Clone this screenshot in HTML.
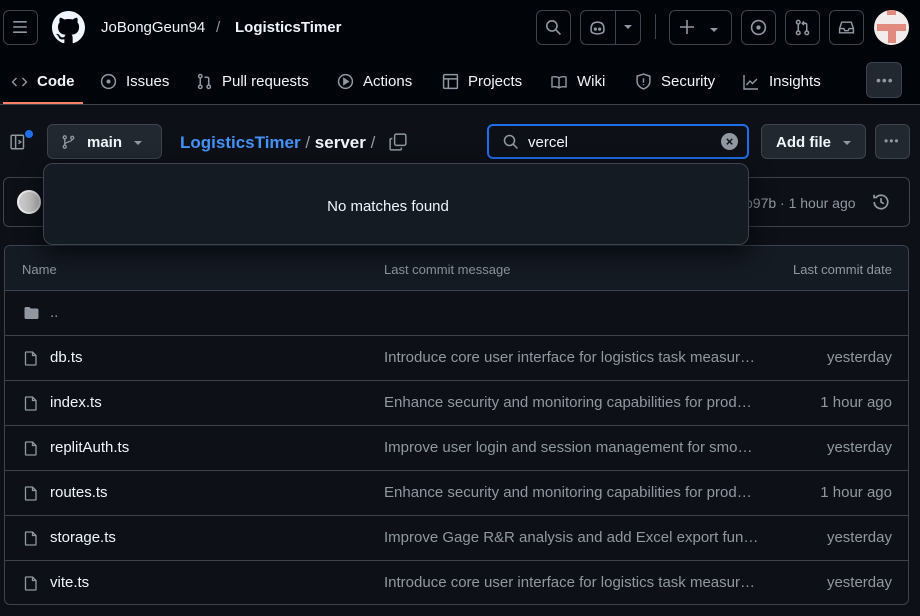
<!DOCTYPE html>
<html><head><meta charset="utf-8"><style>
*{box-sizing:border-box;margin:0;padding:0}
body{width:920px;height:616px;background:#0d1117;font-family:"Liberation Sans",sans-serif;color:#f0f6fc;position:relative;overflow:hidden;font-size:14px}
.abs{position:absolute}
.btn{position:absolute;border:1px solid #3d444d;border-radius:6px;background:transparent}
.hdr{position:absolute;left:0;top:0;width:920px;height:105px;background:#010409;border-bottom:1px solid #3d444d}
.tab{position:absolute;top:73px;font-size:15px;color:#f0f6fc;display:flex;align-items:center}
.tab svg{margin-right:9px}
svg{display:block}
.row{position:absolute;left:5px;width:903px;height:45px;border-top:1px solid #3d444d}
.row .n{position:absolute;left:45px;top:13px;font-size:15px;color:#f0f6fc}
.row .m{position:absolute;left:379px;top:13px;font-size:15px;color:#9198a1;width:376px;white-space:nowrap;overflow:hidden;text-overflow:ellipsis}
.row .d{position:absolute;right:16px;top:13px;font-size:15px;color:#9198a1}
.row svg{position:absolute;left:18px;top:14px}
</style></head><body>
<div class="hdr"></div>
<div class="btn" style="left:3px;top:10px;width:35px;height:35px"></div>
<svg class="abs" style="left:12px;top:19px" width="16" height="16" viewBox="0 0 16 16" fill="#9198a1"><rect x="1" y="2" width="14" height="1.6" rx=".8"/><rect x="1" y="7.2" width="14" height="1.6" rx=".8"/><rect x="1" y="12.4" width="14" height="1.6" rx=".8"/></svg>
<svg class="abs" style="left:52px;top:11px" width="33" height="33" viewBox="0 0 16 16" fill="#f0f6fc"><path d="M8 0C3.58 0 0 3.58 0 8c0 3.54 2.29 6.53 5.47 7.59.4.07.55-.17.55-.38 0-.19-.01-.82-.01-1.49-2.01.37-2.53-.49-2.69-.94-.09-.23-.48-.94-.82-1.13-.28-.15-.68-.52-.01-.53.63-.01 1.08.58 1.23.82.72 1.21 1.87.87 2.33.66.07-.52.28-.87.51-1.07-1.78-.2-3.64-.89-3.64-3.95 0-.87.31-1.59.82-2.15-.08-.2-.36-1.020.08-2.12 0 0 .67-.21 2.2.82.64-.18 1.32-.27 2-.27.68 0 1.36.09 2 .27 1.53-1.04 2.2-.82 2.2-.82.44 1.1.16 1.92.08 2.12.51.56.82 1.27.82 2.15 0 3.07-1.87 3.75-3.65 3.95.29.25.54.73.54 1.48 0 1.07-.01 1.93-.01 2.2 0 .21.15.46.55.38A8.013 8.013 0 0016 8c0-4.42-3.58-8-8-8z"/></svg>
<div class="abs" style="left:101px;top:19px;font-size:15px">JoBongGeun94</div>
<div class="abs" style="left:216px;top:19px;font-size:15px;color:#9198a1">/</div>
<div class="abs" style="left:235px;top:19px;font-size:15px;font-weight:bold">LogisticsTimer</div>
<div class="btn" style="left:536px;top:10px;width:35px;height:35px"></div>
<svg class="abs" style="left:545px;top:19px" width="17" height="17" viewBox="0 0 16 16" fill="none" stroke="#9198a1" stroke-width="1.5"><circle cx="6.5" cy="6.5" r="4.8"/><path d="M10 10l4.5 4.5"/></svg>
<div class="btn" style="left:580px;top:10px;width:61px;height:35px"></div>
<div class="abs" style="left:615px;top:11px;width:1px;height:33px;background:#3d444d"></div>
<svg class="abs" style="left:589px;top:19px" width="17" height="17" viewBox="0 0 16 16" fill="none" stroke="#9198a1" stroke-width="1.5"><path d="M2 9c0-4 2-6 6-6s6 2 6 6v2c0 2-3 3-6 3s-6-1-6-3z"/><circle cx="6" cy="9.5" r=".8" fill="#9198a1"/><circle cx="10" cy="9.5" r=".8" fill="#9198a1"/></svg>
<svg class="abs" style="left:624px;top:25px" width="8" height="5"><path d="M0 0h8L4 4z" fill="#9198a1"/></svg>
<div class="abs" style="left:655px;top:14px;width:1px;height:25px;background:#3d444d"></div>
<div class="btn" style="left:669px;top:10px;width:63px;height:35px"></div>
<svg class="abs" style="left:679px;top:19px" width="16" height="16" viewBox="0 0 16 16" stroke="#9198a1" stroke-width="1.6"><path d="M8 1v14M1 8h14"/></svg>
<svg class="abs" style="left:710px;top:28px" width="8" height="5"><path d="M0 0h8L4 4z" fill="#9198a1"/></svg>
<div class="btn" style="left:741px;top:10px;width:35px;height:35px"></div>
<svg class="abs" style="left:750px;top:19px" width="17" height="17" viewBox="0 0 16 16" fill="none" stroke="#9198a1" stroke-width="1.5"><circle cx="8" cy="8" r="6.5"/><circle cx="8" cy="8" r="1.3" fill="#9198a1"/></svg>
<div class="btn" style="left:785px;top:10px;width:35px;height:35px"></div>
<svg class="abs" style="left:794px;top:19px" width="17" height="17" viewBox="0 0 16 16" fill="none" stroke="#9198a1" stroke-width="1.4"><circle cx="4" cy="3" r="1.7"/><circle cx="4" cy="13" r="1.7"/><circle cx="12" cy="13" r="1.7"/><path d="M4 5v6M12 11V5.5c0-1-.5-1.5-1.5-1.5H8M9.5 2.3 7.8 4l1.7 1.7"/></svg>
<div class="btn" style="left:829px;top:10px;width:35px;height:35px"></div>
<svg class="abs" style="left:838px;top:19px" width="17" height="17" viewBox="0 0 16 16" fill="none" stroke="#9198a1" stroke-width="1.4"><path d="M1.5 9 3.5 3h9l2 6v4h-13zM1.5 9h4l1 2h3l1-2h4"/></svg>
<div class="abs" style="left:874px;top:10px;width:35px;height:35px;border-radius:50%;background:#f3ecec;overflow:hidden">
<div class="abs" style="left:13px;top:0;width:9px;height:5px;background:#e08a80"></div>
<div class="abs" style="left:3px;top:14px;width:29px;height:7px;background:#e08a80"></div>
<div class="abs" style="left:14px;top:21px;width:8px;height:12px;background:#e08a80"></div>
</div>
<div class="tab" style="left:11px"><svg width="17" height="16" viewBox="0 0 16 16" fill="none" stroke="#9198a1" stroke-width="1.4"><path d="M5 4 1 8l4 4M11 4l4 4-4 4"/></svg><b>Code</b></div>
<div class="abs" style="left:3px;top:102px;width:80px;height:2px;background:#f78166;z-index:2"></div>
<div class="tab" style="left:100px"><svg width="17" height="17" viewBox="0 0 16 16" fill="none" stroke="#9198a1" stroke-width="1.4"><circle cx="8" cy="8" r="6.5"/><circle cx="8" cy="8" r="1.2" fill="#9198a1"/></svg>Issues</div>
<div class="tab" style="left:196px"><svg width="17" height="17" viewBox="0 0 16 16" fill="none" stroke="#9198a1" stroke-width="1.4"><circle cx="4" cy="3" r="1.6"/><circle cx="4" cy="13" r="1.6"/><circle cx="12" cy="13" r="1.6"/><path d="M4 5v6M12 11V5.5c0-1-.5-1.5-1.5-1.5H8"/></svg>Pull requests</div>
<div class="tab" style="left:337px"><svg width="17" height="17" viewBox="0 0 16 16" fill="none" stroke="#9198a1" stroke-width="1.4"><circle cx="8" cy="8" r="6.5"/><path d="M6.5 5.3v5.4L10.5 8z" fill="#9198a1"/></svg>Actions</div>
<div class="tab" style="left:442px"><svg width="17" height="17" viewBox="0 0 16 16" fill="none" stroke="#9198a1" stroke-width="1.4"><rect x="1.5" y="1.5" width="13" height="13" rx="1"/><path d="M1.5 5.5h13M6 5.5v9"/></svg>Projects</div>
<div class="tab" style="left:550px"><svg width="18" height="16" viewBox="0 0 16 16" fill="none" stroke="#9198a1" stroke-width="1.4"><path d="M8 4C6 2.5 3.5 2.5 1 3v10c2.5-.5 5-.5 7 1 2-1.5 4.5-1.5 7-1V3c-2.5-.5-5-.5-7 1zM8 4v10"/></svg>Wiki</div>
<div class="tab" style="left:635px"><svg width="17" height="17" viewBox="0 0 16 16" fill="none" stroke="#9198a1" stroke-width="1.4"><path d="M8 1 2 3v5c0 3.5 3 6 6 7 3-1 6-3.5 6-7V3z"/><path d="M8 5v4M8 10.5v1"/></svg>Security</div>
<div class="tab" style="left:742px"><svg width="18" height="16" viewBox="0 0 16 16" fill="none" stroke="#9198a1" stroke-width="1.4"><path d="M1 1v14h14M3.5 11 7 7l2.5 2.5L14 5"/></svg>Insights</div>
<div class="btn" style="left:866px;top:62px;width:36px;height:36px;background:#212830"></div>
<div class="abs" style="left:876px;top:72px;font-size:14px;color:#9198a1;letter-spacing:1px">•••</div>

<svg class="abs" style="left:10px;top:133px" width="18" height="18" viewBox="0 0 16 16" fill="none" stroke="#9198a1" stroke-width="1.3"><rect x="1" y="2" width="11" height="12" rx="1"/><path d="M5 2v12M7.5 6.5 9.5 8l-2 1.5"/></svg>
<div class="abs" style="left:24px;top:129px;width:10px;height:10px;border-radius:50%;background:#1f6feb;border:1px solid #0d1117"></div>
<div class="btn" style="left:47px;top:124px;width:115px;height:35px;background:#212830"></div>
<svg class="abs" style="left:61px;top:134px" width="15" height="16" viewBox="0 0 16 16" fill="none" stroke="#9198a1" stroke-width="1.4"><circle cx="4" cy="3" r="1.6"/><circle cx="4" cy="13" r="1.6"/><circle cx="12" cy="3.5" r="1.6"/><path d="M4 4.6v6.8M12 5.1c0 3-8 2.5-8 5.5"/></svg>
<div class="abs" style="left:87px;top:134px;font-size:15px;font-weight:bold">main</div>
<svg class="abs" style="left:134px;top:141px" width="8" height="5"><path d="M0 0h8L4 4z" fill="#9198a1"/></svg>
<div class="abs" style="left:180px;top:133px;font-size:17px"><span style="color:#4493f8;font-weight:bold">LogisticsTimer</span><span style="color:#9198a1"> / </span><b>server</b><span style="color:#9198a1"> /</span></div>
<svg class="abs" style="left:389px;top:133px" width="18" height="18" viewBox="0 0 16 16" fill="none" stroke="#9198a1" stroke-width="1.3"><rect x="5" y="1" width="10" height="10" rx="1.5"/><path d="M3 5H2a1 1 0 0 0-1 1v8a1 1 0 0 0 1 1h8a1 1 0 0 0 1-1v-1"/></svg>
<div class="abs" style="left:487px;top:124px;width:262px;height:35px;border:2px solid #1f6feb;border-radius:6px;background:#0d1117"></div>
<svg class="abs" style="left:503px;top:134px" width="16" height="16" viewBox="0 0 16 16" fill="none" stroke="#9198a1" stroke-width="1.5"><circle cx="6.5" cy="6.5" r="5"/><path d="M10.2 10.2 14.5 14.5"/></svg>
<div class="abs" style="left:528px;top:134px;font-size:15px">vercel</div>
<div class="abs" style="left:721px;top:133px;width:17px;height:17px;border-radius:50%;background:#9198a1;color:#0d1117;font-size:13px;font-weight:bold;text-align:center;line-height:17px">×</div>
<div class="btn" style="left:761px;top:124px;width:105px;height:35px;background:#212830"></div>
<div class="abs" style="left:776px;top:134px;font-size:15px;font-weight:bold">Add file</div>
<svg class="abs" style="left:843px;top:141px" width="8" height="5"><path d="M0 0h8L4 4z" fill="#9198a1"/></svg>
<div class="btn" style="left:875px;top:124px;width:35px;height:35px;background:#212830"></div>
<div class="abs" style="left:884px;top:134px;font-size:12px;color:#9198a1;letter-spacing:1px">•••</div>

<div class="btn" style="left:3px;top:177px;width:907px;height:50px;background:#0d1117"></div>
<div class="abs" style="left:17px;top:190px;width:24px;height:24px;border-radius:50%;background:#ccc;border:2px solid #eee"></div>
<div class="abs" style="left:745px;top:195px;font-size:14px;color:#9198a1">b97b · 1 hour ago</div>
<svg class="abs" style="left:872px;top:193px" width="18" height="18" viewBox="0 0 16 16" fill="none" stroke="#9198a1" stroke-width="1.5"><path d="M2 8a6 6 0 1 0 1.8-4.3M1.8 1.5v2.5h2.5M8 4.5V8l2.5 1.5"/></svg>

<div class="abs" style="left:4px;top:245px;width:905px;height:360px;border:1px solid #3d444d;border-radius:6px;overflow:hidden">
<div class="abs" style="left:0;top:0;width:905px;height:45px;background:#151b23"></div>
<div class="abs" style="left:17px;top:16px;font-size:13px;color:#9198a1">Name</div>
<div class="abs" style="left:379px;top:16px;font-size:13px;color:#9198a1">Last commit message</div>
<div class="abs" style="right:16px;top:16px;font-size:13px;color:#9198a1">Last commit date</div>
</div>
<div class="row" style="top:290px"><svg width="17" height="16" viewBox="0 0 16 16" fill="#9198a1"><path d="M1 3.5C1 2.7 1.7 2 2.5 2h3.3l1.5 1.5h6.2c.8 0 1.5.7 1.5 1.5v7.5c0 .8-.7 1.5-1.5 1.5h-11C1.7 14 1 13.3 1 12.5z"/></svg><div class="n" style="color:#9198a1">..</div></div>
<div class="row" style="top:335px"><svg width="16" height="17" viewBox="0 0 16 16" fill="none" stroke="#9198a1" stroke-width="1.3"><path d="M3 1.5h6.5L13 5v9a.5.5 0 0 1-.5.5h-9.5a.5.5 0 0 1-.5-.5V2a.5.5 0 0 1 .5-.5zM9.5 1.5V5H13"/></svg><div class="n">db.ts</div><div class="m">Introduce core user interface for logistics task measurement</div><div class="d">yesterday</div></div>
<div class="row" style="top:380px"><svg width="16" height="17" viewBox="0 0 16 16" fill="none" stroke="#9198a1" stroke-width="1.3"><path d="M3 1.5h6.5L13 5v9a.5.5 0 0 1-.5.5h-9.5a.5.5 0 0 1-.5-.5V2a.5.5 0 0 1 .5-.5zM9.5 1.5V5H13"/></svg><div class="n">index.ts</div><div class="m">Enhance security and monitoring capabilities for production</div><div class="d">1 hour ago</div></div>
<div class="row" style="top:425px"><svg width="16" height="17" viewBox="0 0 16 16" fill="none" stroke="#9198a1" stroke-width="1.3"><path d="M3 1.5h6.5L13 5v9a.5.5 0 0 1-.5.5h-9.5a.5.5 0 0 1-.5-.5V2a.5.5 0 0 1 .5-.5zM9.5 1.5V5H13"/></svg><div class="n">replitAuth.ts</div><div class="m">Improve user login and session management for smoother</div><div class="d">yesterday</div></div>
<div class="row" style="top:470px"><svg width="16" height="17" viewBox="0 0 16 16" fill="none" stroke="#9198a1" stroke-width="1.3"><path d="M3 1.5h6.5L13 5v9a.5.5 0 0 1-.5.5h-9.5a.5.5 0 0 1-.5-.5V2a.5.5 0 0 1 .5-.5zM9.5 1.5V5H13"/></svg><div class="n">routes.ts</div><div class="m">Enhance security and monitoring capabilities for production</div><div class="d">1 hour ago</div></div>
<div class="row" style="top:515px"><svg width="16" height="17" viewBox="0 0 16 16" fill="none" stroke="#9198a1" stroke-width="1.3"><path d="M3 1.5h6.5L13 5v9a.5.5 0 0 1-.5.5h-9.5a.5.5 0 0 1-.5-.5V2a.5.5 0 0 1 .5-.5zM9.5 1.5V5H13"/></svg><div class="n">storage.ts</div><div class="m">Improve Gage R&amp;R analysis and add Excel export functionality</div><div class="d">yesterday</div></div>
<div class="row" style="top:560px"><svg width="16" height="17" viewBox="0 0 16 16" fill="none" stroke="#9198a1" stroke-width="1.3"><path d="M3 1.5h6.5L13 5v9a.5.5 0 0 1-.5.5h-9.5a.5.5 0 0 1-.5-.5V2a.5.5 0 0 1 .5-.5zM9.5 1.5V5H13"/></svg><div class="n">vite.ts</div><div class="m">Introduce core user interface for logistics task measurement</div><div class="d">yesterday</div></div>

<div class="abs" style="left:43px;top:163px;width:706px;height:82px;background:#151b23;border:1px solid #3d444d;border-radius:10px;box-shadow:0 8px 24px rgba(1,4,9,.8)"></div>
<div class="abs" style="left:43px;top:198px;width:690px;text-align:center;font-size:15px">No matches found</div>
</body></html>
